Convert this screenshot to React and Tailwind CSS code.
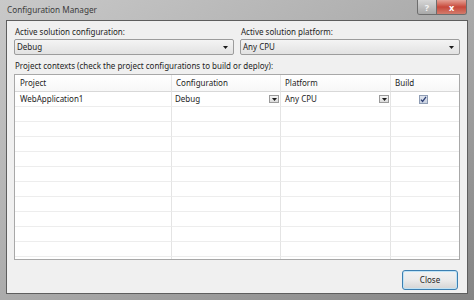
import React from 'react';

function Arrow({ className = '' }) {
  return (
    <svg width="5" height="3" viewBox="0 0 5 3" className={className}>
      <path d="M0 0h5L2.5 3z" fill="#1a1a1a" />
    </svg>
  );
}

function Combo({ value }) {
  return (
    <div className="h-[16px] flex items-center justify-between rounded-[2px] border border-[#9c9c9c] bg-linear-to-b from-[#f4f4f4] to-[#e2e2e2] pl-[2px] pr-[5px]">
      <span className="text-[#1e1e1e]">{value}</span>
      <Arrow />
    </div>
  );
}

function CellDrop() {
  return (
    <div className="w-[10px] h-[8px] flex items-center justify-center border border-[#9a9a9a] bg-linear-to-b from-[#f6f6f6] to-[#dcdcdc]">
      <Arrow />
    </div>
  );
}

const cell = 'h-[15px] flex items-center border-r border-b border-r-[#e4e4e4] border-b-[#ededed]';

export default function App() {
  const empty = Array.from({ length: 11 });

  return (
    <div className="w-[474px] h-[300px] flex flex-col overflow-hidden bg-linear-to-br from-[#c9c9c9] via-[#ababab] to-[#858585] font-['Noto_Sans',sans-serif] text-[8px] text-[#1e1e1e] select-none">
      {/* title bar */}
      <div className="h-[20px] shrink-0 flex items-start justify-between">
        <span className="pl-[7px] pt-[4px] text-[8.2px] leading-[12px] text-[#3c3c3c]">Configuration Manager</span>
        <div className="flex mr-[7px] rounded-b-[3px] border border-t-0 border-[#6d6d6d] overflow-hidden">
          <div className="w-[19px] h-[14px] flex items-center justify-center border-r border-[#6d6d6d] bg-linear-to-b from-[#d6d6d6] to-[#a9a9a9] text-[9px] font-bold text-[#f4f4f4] leading-none">
            ?
          </div>
          <div className="w-[29px] h-[14px] flex items-center justify-center bg-linear-to-b from-[#e3a095] via-[#c7473a] to-[#d27b6c] text-[9px] font-bold text-white leading-none">
            x
          </div>
        </div>
      </div>

      {/* client area */}
      <div className="flex-1 mx-[6px] mb-[6px] border border-[#5e5e5e] bg-[#f0f0f0] flex flex-col px-[7px] pt-[5px]">
        <div className="grid grid-cols-[220px_220px] gap-x-[6px]">
          <div className="flex flex-col gap-[1px]">
            <span className="pl-[1px] leading-[12px]">Active solution configuration:</span>
            <Combo value="Debug" />
          </div>
          <div className="flex flex-col gap-[1px]">
            <span className="pl-[1px] leading-[12px]">Active solution platform:</span>
            <Combo value="Any CPU" />
          </div>
        </div>

        <span className="mt-[5px] pl-[1px] leading-[12px]">
          Project contexts (check the project configurations to build or deploy):
        </span>

        <div className="mt-[2px] h-[186px] border border-[#a8a8a8] bg-white overflow-hidden">
          <div className="grid grid-cols-[157px_109px_110px_1fr]">
            {['Project', 'Configuration', 'Platform', 'Build'].map((h, i) => (
              <div
                key={h}
                className={`h-[17px] flex items-center border-b border-[#d8d8d8] bg-linear-to-b from-white to-[#f7f7f7] ${
                  i < 3 ? 'border-r border-r-[#e6e6e6]' : ''
                } ${i === 0 ? 'pl-[5px]' : 'pl-[4px]'}`}
              >
                {h}
              </div>
            ))}

            <div className={`${cell} pl-[5px]`}>WebApplication1</div>
            <div className={`${cell} pl-[3px] pr-[1px] justify-between`}>
              <span>Debug</span>
              <CellDrop />
            </div>
            <div className={`${cell} pl-[4px] pr-[1px] justify-between`}>
              <span>Any CPU</span>
              <CellDrop />
            </div>
            <div className={`${cell} border-r-0 pl-[28px]`}>
              <div className="w-[9px] h-[9px] border border-[#8f9db4] bg-linear-to-b from-[#dfe4ee] to-[#c9d1e0] flex items-center justify-center">
                <svg width="7" height="7" viewBox="0 0 7 7">
                  <path d="M1 3.6l1.6 1.9L6 0.8" fill="none" stroke="#2d3f74" strokeWidth="1.3" />
                </svg>
              </div>
            </div>

            {empty.map((_, r) =>
              [0, 1, 2, 3].map((c) => (
                <div key={`${r}-${c}`} className={`${cell} ${c === 3 ? 'border-r-0' : ''}`} />
              ))
            )}
          </div>
        </div>

        <div className="mt-[10px] self-end mr-[2px] w-[56px] h-[20px] rounded-[3px] border border-[#3c7fb1] bg-linear-to-b from-[#f2f2f2] via-[#ebebeb] to-[#d4d4d4] shadow-[inset_0_0_0_1px_#bfe3f6] flex items-center justify-center">
          Close
        </div>
      </div>
    </div>
  );
}
